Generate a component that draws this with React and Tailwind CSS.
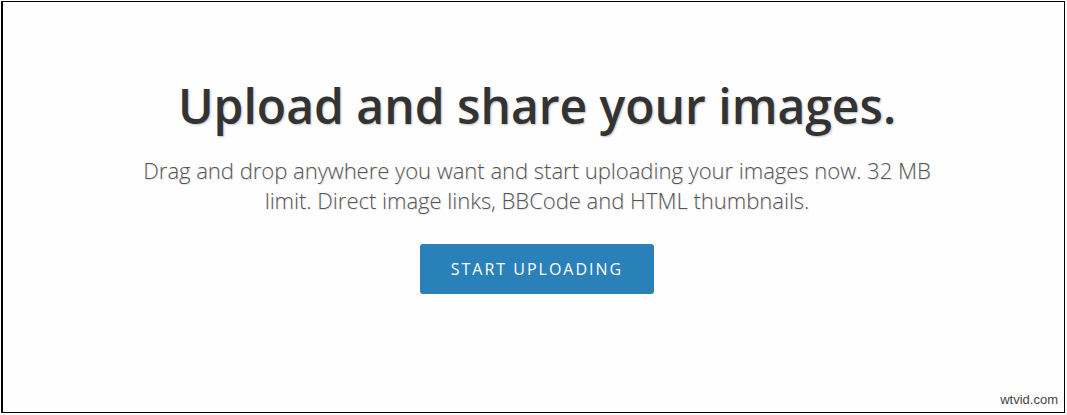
export default function App() {
  return (
    <div className="w-[1067px] h-[415px] bg-white pt-px pl-px relative" style={{ fontFamily: '"Open Sans", sans-serif' }}>
      <div className="w-[1064px] h-[412px] border border-black border-l-2 flex flex-col items-center pl-[7px] bg-[#fefefe]">
        <h1 className="mt-[72px] text-[48px] leading-[64px] font-semibold text-[#333] [text-shadow:1px_1px_2px_rgba(0,0,0,0.25)]">
          Upload and share your images.
        </h1>
        <p className="mt-[17px] w-[800px] text-center text-[22px] leading-[30px] font-light text-[#555] [text-shadow:1px_1px_1px_rgba(0,0,0,0.12)]">
          Drag and drop anywhere you want and start uploading your images now. 32 MB limit. Direct image links, BBCode and HTML thumbnails.
        </p>
        <button className="mt-[29px] w-[234px] h-[50px] rounded-[3px] bg-[#2a80b9] text-white text-[16px] tracking-[2px]">
          START UPLOADING
        </button>
      </div>
      <div className="absolute right-[9px] bottom-[6px] text-[13px] text-[#444]" style={{ fontFamily: '"Liberation Sans", sans-serif' }}>wtvid.com</div>
    </div>
  );
}
